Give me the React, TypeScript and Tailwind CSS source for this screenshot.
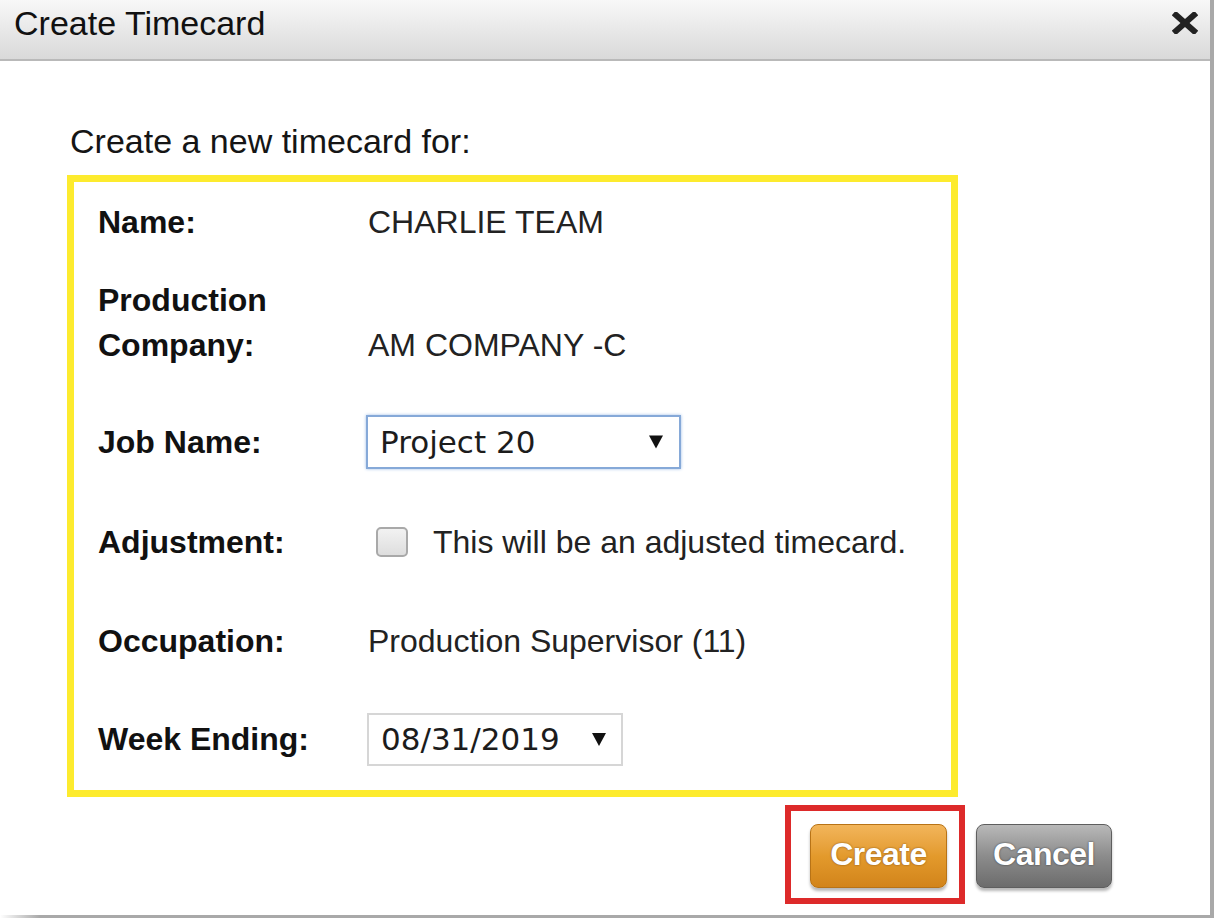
import React from 'react'

const sans = "font-['Liberation_Sans',Arial,sans-serif]"

function Caret({ className }: { className?: string }) {
  return (
    <svg viewBox="0 0 14 13" className={className} fill="#111">
      <polygon points="0,0 14,0 7,13" />
    </svg>
  )
}

function CloseIcon() {
  return (
    <svg width="26" height="22" viewBox="0 0 26 22">
      <g stroke="#222" strokeWidth="6" strokeLinecap="square">
        <line x1="4" y1="3" x2="22" y2="19" />
        <line x1="22" y1="3" x2="4" y2="19" />
      </g>
    </svg>
  )
}

function Row({ label, children, className = '' }: { label: React.ReactNode; children: React.ReactNode; className?: string }) {
  return (
    <div className={`flex items-center ${className}`}>
      <div className='w-[270px] shrink-0 font-bold text-[32px] leading-[45px] text-[#111]'>{label}</div>
      <div className='flex items-center text-[32px] leading-[45px] text-[#222]'>{children}</div>
    </div>
  )
}

export default function App() {
  return (
    <div className={`w-[1214px] h-[918px] flex bg-white ${sans}`}>
      <div className='flex-1 flex flex-col'>
        {/* header */}
        <div className='h-[61px] shrink-0 flex items-start justify-between bg-gradient-to-b from-[#f8f8f8] to-[#d9d9d9] border-b-2 border-[#b9b9b9]'>
          <h1 className='pl-[14px] pt-[3px] text-[34px] leading-[40px] text-[#111]'>Create Timecard</h1>
          <div className='pr-[12px] pt-[12px]'><CloseIcon /></div>
        </div>

        {/* body */}
        <div className='flex-1 flex flex-col pl-[67px]'>
          <p className='ml-[3px] mt-[60px] text-[34px] leading-[40px] text-[#151515]'>Create a new timecard for:</p>

          <div className='mt-[14px] w-[891px] border-[7px] border-[#fdeb2e] pl-[24px] pt-[18px] pb-[24px] flex flex-col'>
            <Row label='Name:'>CHARLIE TEAM</Row>

            <div className='flex items-end mt-[33px]'>
              <div className='w-[270px] shrink-0 font-bold text-[32px] leading-[45px] text-[#111]'>Production<br />Company:</div>
              <div className='text-[32px] leading-[45px] text-[#222]'>AM COMPANY -C</div>
            </div>

            <Row label='Job Name:' className='mt-[47px] h-[54px]'>
              <div className="-ml-[2px] w-[315px] h-[54px] flex items-center justify-between pl-[12px] pr-[16px] border-2 border-[#86a9d8] shadow-[0_0_3px_#9ebde6] font-['DejaVu_Sans',Verdana,sans-serif] text-[31px] text-[#1c1c1c]">
                <span>Project 20</span>
                <Caret className='w-[14px] h-[14px]' />
              </div>
            </Row>

            <Row label='Adjustment:' className='mt-[46px] h-[54px]'>
              <span className='ml-[8px] w-[32px] h-[30px] rounded-[5px] border-2 border-[#a9a9a9] bg-gradient-to-b from-[#f2f2f2] to-[#dedede]' />
              <span className='ml-[25px]'>This will be an adjusted timecard.</span>
            </Row>

            <Row label='Occupation:' className='mt-[45px] h-[54px]'>Production Supervisor (11)</Row>

            <Row label='Week Ending:' className='mt-[44px] h-[54px]'>
              <div className="-ml-[1px] w-[256px] h-[53px] flex items-center justify-between pl-[12px] pr-[14px] border-2 border-[#d6d6d6] font-['DejaVu_Sans',Verdana,sans-serif] text-[31px] text-[#1c1c1c]">
                <span>08/31/2019</span>
                <Caret className='w-[16px] h-[13px]' />
              </div>
            </Row>
          </div>

          {/* actions */}
          <div className='mt-[8px] flex items-start justify-end pr-[98px]'>
            <div className='border-[6px] border-[#dd2a2a] pl-[19px] pt-[13px] pb-[10px] pr-[12px]'>
              <button className='w-[137px] h-[64px] pb-[5px] rounded-[8px] border border-[#b87316] bg-gradient-to-b from-[#f2b55a] via-[#e39a2c] to-[#d2841a] text-white font-bold text-[32px] tracking-[-0.5px] [text-shadow:0_0_2px_#7a4a10] shadow-[0_3px_3px_#b8b8b8]'>Create</button>
            </div>
            <button className='ml-[11px] mt-[19px] w-[136px] h-[64px] pb-[5px] rounded-[8px] border border-[#5e5e5e] bg-gradient-to-b from-[#b9b9b9] via-[#8c8c8c] to-[#6c6c6c] text-white font-bold text-[32px] tracking-[-0.5px] [text-shadow:0_0_2px_#333] shadow-[0_3px_3px_#b8b8b8]'>Cancel</button>
          </div>
          <div className='flex-1' />
        </div>

        {/* bottom shadow edge */}
        <div className='h-[3px] shrink-0 bg-gradient-to-r from-white to-[#a9a9a9] to-[40px]' />
      </div>
      <div className='w-[4px] shrink-0 bg-[#a9a9a9]' />
    </div>
  )
}
